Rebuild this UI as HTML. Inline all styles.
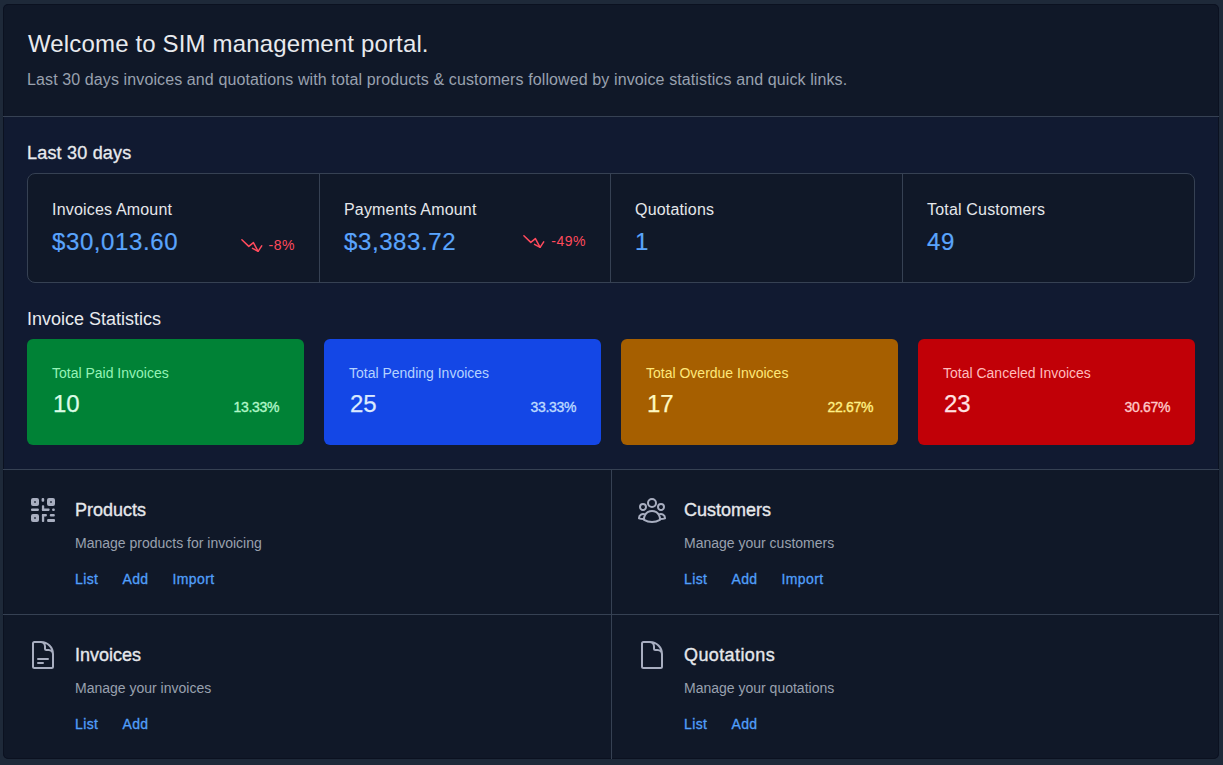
<!DOCTYPE html>
<html>
<head>
<meta charset="utf-8">
<style>
html,body{margin:0;padding:0;}
body{width:1223px;height:765px;background:#1e2939;position:relative;overflow:hidden;font-family:"Liberation Sans",sans-serif;}
.card{position:absolute;left:3px;top:4px;width:1216px;height:755px;background:#101828;border-radius:5px;overflow:hidden;}
.ring{position:absolute;left:0;top:0;right:0;bottom:0;border:1px solid #0b1120;border-radius:5px;pointer-events:none;}
.t{position:absolute;white-space:nowrap;line-height:1;}
.mid{position:absolute;left:0;top:113px;width:1216px;height:352px;background:#111a31;}
.hl{position:absolute;left:0;width:1216px;height:1px;background:#364153;}
.vl{position:absolute;top:466px;left:608px;width:1px;height:300px;background:#364153;}
.stats{position:absolute;left:24px;top:169px;width:1166px;height:108px;border:1px solid #364153;border-radius:8px;background:#101828;}
.sdiv{position:absolute;top:0;width:1px;height:108px;background:#364153;}
.ic{position:absolute;width:277px;height:106px;top:335px;border-radius:6px;}
.cell{position:absolute;top:0;width:291px;height:108px;}
.lab{font-size:16px;letter-spacing:0.18px;color:#e5e7eb;}
.val{font-size:24px;letter-spacing:0.6px;color:#5aa4fc;-webkit-text-stroke:0.2px #5aa4fc;}
.trend{position:absolute;right:24px;top:63px;height:18px;display:flex;}
.t2{margin-left:5px;letter-spacing:0.5px;margin-top:1px;font-size:14px;line-height:1;color:#ff4a5c;white-space:nowrap;}
.ico{position:absolute;width:32px;height:32px;}
.ico svg{display:block;}
.sec{font-size:18px;color:#e5e7eb;-webkit-text-stroke:0.35px #e5e7eb;}
.desc{font-size:14px;color:#99a1af;}
.links{position:absolute;display:flex;gap:24px;white-space:nowrap;}
.links span{font-size:14px;line-height:1;letter-spacing:0.4px;color:#519ffa;-webkit-text-stroke:0.3px #519ffa;}
</style>
</head>
<body>
<div class="card">
  <div class="mid"></div>
  <div class="ring"></div>
  <div class="hl" style="top:112px"></div>
  <div class="hl" style="top:465px"></div>
  <div class="hl" style="top:610px"></div>
  <div class="vl"></div>

  <div class="t" style="left:25px;top:28px;font-size:24px;letter-spacing:0.15px;color:#e8eaee">Welcome to SIM management portal.</div>
  <div class="t" style="left:24px;top:68px;font-size:16px;letter-spacing:0.11px;color:#99a1af">Last 30 days invoices and quotations with total products &amp; customers followed by invoice statistics and quick links.</div>

  <div class="t" style="left:24px;top:140px;font-size:18px;letter-spacing:0.2px;-webkit-text-stroke:0.3px #e8eaee;color:#e8eaee">Last 30 days</div>

  <div class="stats">
<div class="cell" style="left:0px"><div class="t lab" style="left:24px;top:28px">Invoices Amount</div><div class="t val" style="left:24px;top:56px">$30,013.60</div><div class="trend"><svg width="25" height="18" viewBox="0 0 25 18" style="flex:none"><polyline points="2.9,2.75 9.8,9.4 14.4,5.6 19.1,14.3" fill="none" stroke="#ff4a5c" stroke-width="1.5" stroke-linecap="round" stroke-linejoin="round"/><polyline points="13.5,11.4 19.1,14.3 22.7,8.8" fill="none" stroke="#ff4a5c" stroke-width="1.5" stroke-linecap="round" stroke-linejoin="round"/></svg><span class="t2">-8%</span></div></div>
<div class="cell" style="left:292px;width:290px"><div class="t lab" style="left:24px;top:28px">Payments Amount</div><div class="t val" style="left:24px;top:56px">$3,383.72</div><div class="trend" style="top:59px"><svg width="25" height="18" viewBox="0 0 25 18" style="flex:none"><polyline points="2.9,2.75 9.8,9.4 14.4,5.6 19.1,14.3" fill="none" stroke="#ff4a5c" stroke-width="1.5" stroke-linecap="round" stroke-linejoin="round"/><polyline points="13.5,11.4 19.1,14.3 22.7,8.8" fill="none" stroke="#ff4a5c" stroke-width="1.5" stroke-linecap="round" stroke-linejoin="round"/></svg><span class="t2">-49%</span></div></div>
<div class="cell" style="left:583px"><div class="t lab" style="left:24px;top:28px">Quotations</div><div class="t val" style="left:24px;top:56px">1</div></div>
<div class="cell" style="left:875px"><div class="t lab" style="left:24px;top:28px">Total Customers</div><div class="t val" style="left:24px;top:56px">49</div></div>
    <div class="sdiv" style="left:291px"></div>
    <div class="sdiv" style="left:582px"></div>
    <div class="sdiv" style="left:874px"></div>
  </div>
  <div class="t" style="left:24px;top:306px;font-size:18px;letter-spacing:0px;color:#e8eaee">Invoice Statistics</div>
  <div class="ic" style="left:24px;background:#008236"><div class="t" style="left:25px;top:27px;font-size:14px;color:#95f3b6">Total Paid Invoices</div><div class="t" style="left:26px;top:53px;font-size:24px;-webkit-text-stroke:0.25px #dcfce7;color:#dcfce7">10</div><div class="t" style="right:25px;top:61px;font-size:14px;letter-spacing:-0.35px;-webkit-text-stroke:0.35px currentColor;color:#b0f6c8">13.33%</div></div>
  <div class="ic" style="left:321px;background:#1447e6"><div class="t" style="left:25px;top:27px;font-size:14px;color:#b4d3ff">Total Pending Invoices</div><div class="t" style="left:26px;top:53px;font-size:24px;-webkit-text-stroke:0.25px #dbeafe;color:#dbeafe">25</div><div class="t" style="right:25px;top:61px;font-size:14px;letter-spacing:-0.35px;-webkit-text-stroke:0.35px currentColor;color:#bedbff">33.33%</div></div>
  <div class="ic" style="left:618px;background:#a65f00"><div class="t" style="left:25px;top:27px;font-size:14px;color:#ffe87a">Total Overdue Invoices</div><div class="t" style="left:26px;top:53px;font-size:24px;-webkit-text-stroke:0.25px #fef9c2;color:#fef9c2">17</div><div class="t" style="right:25px;top:61px;font-size:14px;letter-spacing:-0.35px;-webkit-text-stroke:0.35px currentColor;color:#fff085">22.67%</div></div>
  <div class="ic" style="left:915px;background:#c10007"><div class="t" style="left:25px;top:27px;font-size:14px;color:#ffbcbc">Total Canceled Invoices</div><div class="t" style="left:26px;top:53px;font-size:24px;-webkit-text-stroke:0.25px #ffe2e2;color:#ffe2e2">23</div><div class="t" style="right:25px;top:61px;font-size:14px;letter-spacing:-0.35px;-webkit-text-stroke:0.35px currentColor;color:#ffc9c9">30.67%</div></div>
  <div class="ico" style="left:24px;top:490px"><svg width="32" height="32" viewBox="0 0 32 32" fill="#a8aec0"><path fill-rule="evenodd" d="M6 4h4A2 2 0 0 1 12 6v4A2 2 0 0 1 10 12h-4A2 2 0 0 1 4 10v-4A2 2 0 0 1 6 4ZM7.2 7.2h1.6v1.6h-1.6Z"/><path fill-rule="evenodd" d="M22 4h4A2 2 0 0 1 28 6v4A2 2 0 0 1 26 12h-4A2 2 0 0 1 20 10v-4A2 2 0 0 1 22 4ZM23.2 7.2h1.6v1.6h-1.6Z"/><path fill-rule="evenodd" d="M6 20h4A2 2 0 0 1 12 22v4A2 2 0 0 1 10 28h-4A2 2 0 0 1 4 26v-4A2 2 0 0 1 6 20ZM7.2 23.2h1.6v1.6h-1.6Z"/><rect x="14.6" y="4" width="2.6" height="3.7" rx="1"/><rect x="14.9" y="11.3" width="2.3" height="5.6" rx="0.8"/><rect x="14.9" y="14.4" width="7.7" height="2.5" rx="0.8"/><rect x="25.1" y="14.5" width="2.7" height="2.4" rx="1"/><rect x="4" y="14.4" width="7.9" height="2.5" rx="1"/><rect x="14.9" y="20.1" width="2.3" height="7.9" rx="0.8"/><rect x="14.9" y="20.1" width="5" height="2.3" rx="0.8"/><rect x="22.8" y="20.1" width="5" height="2.3" rx="1"/><rect x="20.1" y="25.1" width="7.9" height="2.9" rx="1"/></svg></div>
  <div class="t sec" style="left:72px;top:497px">Products</div>
  <div class="t desc" style="left:72px;top:532px">Manage products for invoicing</div>
  <div class="links" style="left:72px;top:568px"><span>List</span><span>Add</span><span>Import</span></div>
  <div class="ico" style="left:633px;top:490px"><svg width="32" height="32" viewBox="0 0 24 24" fill="none" stroke="#a8aec0" stroke-width="1.5" stroke-linecap="round" stroke-linejoin="round"><path d="M18 18.72a9.094 9.094 0 0 0 3.741-.479 3 3 0 0 0-4.682-2.72m.94 3.198.001.031c0 .225-.012.447-.037.666A11.944 11.944 0 0 1 12 21c-2.17 0-4.207-.576-5.963-1.584A6.062 6.062 0 0 1 6 18.719m12 0a5.971 5.971 0 0 0-.941-3.197m0 0A5.995 5.995 0 0 0 12 12.75a5.995 5.995 0 0 0-5.058 2.772m0 0a3 3 0 0 0-4.681 2.72 8.986 8.986 0 0 0 3.74.477m.94-3.197a5.971 5.971 0 0 0-.94 3.197M15 6.75a3 3 0 1 1-6 0 3 3 0 0 1 6 0Zm6 3a2.25 2.25 0 1 1-4.5 0 2.25 2.25 0 0 1 4.5 0Zm-13.5 0a2.25 2.25 0 1 1-4.5 0 2.25 2.25 0 0 1 4.5 0Z"/></svg></div>
  <div class="t sec" style="left:681px;top:497px">Customers</div>
  <div class="t desc" style="left:681px;top:532px">Manage your customers</div>
  <div class="links" style="left:681px;top:568px"><span>List</span><span>Add</span><span>Import</span></div>
  <div class="ico" style="left:24px;top:635px"><svg width="32" height="32" viewBox="0 0 24 24" fill="none" stroke="#a8aec0" stroke-width="1.5" stroke-linecap="round" stroke-linejoin="round"><path d="M19.5 14.25v-2.625a3.375 3.375 0 0 0-3.375-3.375h-1.5A1.125 1.125 0 0 1 13.5 7.125v-1.5a3.375 3.375 0 0 0-3.375-3.375H8.25m0 12.75h7.5m-7.5 3H12M10.5 2.25H5.625c-.621 0-1.125.504-1.125 1.125v17.25c0 .621.504 1.125 1.125 1.125h12.75c.621 0 1.125-.504 1.125-1.125V11.25a9 9 0 0 0-9-9Z"/></svg></div>
  <div class="t sec" style="left:72px;top:642px">Invoices</div>
  <div class="t desc" style="left:72px;top:677px">Manage your invoices</div>
  <div class="links" style="left:72px;top:713px"><span>List</span><span>Add</span></div>
  <div class="ico" style="left:633px;top:635px"><svg width="32" height="32" viewBox="0 0 24 24" fill="none" stroke="#a8aec0" stroke-width="1.5" stroke-linecap="round" stroke-linejoin="round"><path d="M19.5 14.25v-2.625a3.375 3.375 0 0 0-3.375-3.375h-1.5A1.125 1.125 0 0 1 13.5 7.125v-1.5a3.375 3.375 0 0 0-3.375-3.375H8.25m2.25 0H5.625c-.621 0-1.125.504-1.125 1.125v17.25c0 .621.504 1.125 1.125 1.125h12.75c.621 0 1.125-.504 1.125-1.125V11.25a9 9 0 0 0-9-9Z"/></svg></div>
  <div class="t sec" style="left:681px;top:642px;letter-spacing:0.4px">Quotations</div>
  <div class="t desc" style="left:681px;top:677px">Manage your quotations</div>
  <div class="links" style="left:681px;top:713px"><span>List</span><span>Add</span></div>
</div>
</body>
</html>
